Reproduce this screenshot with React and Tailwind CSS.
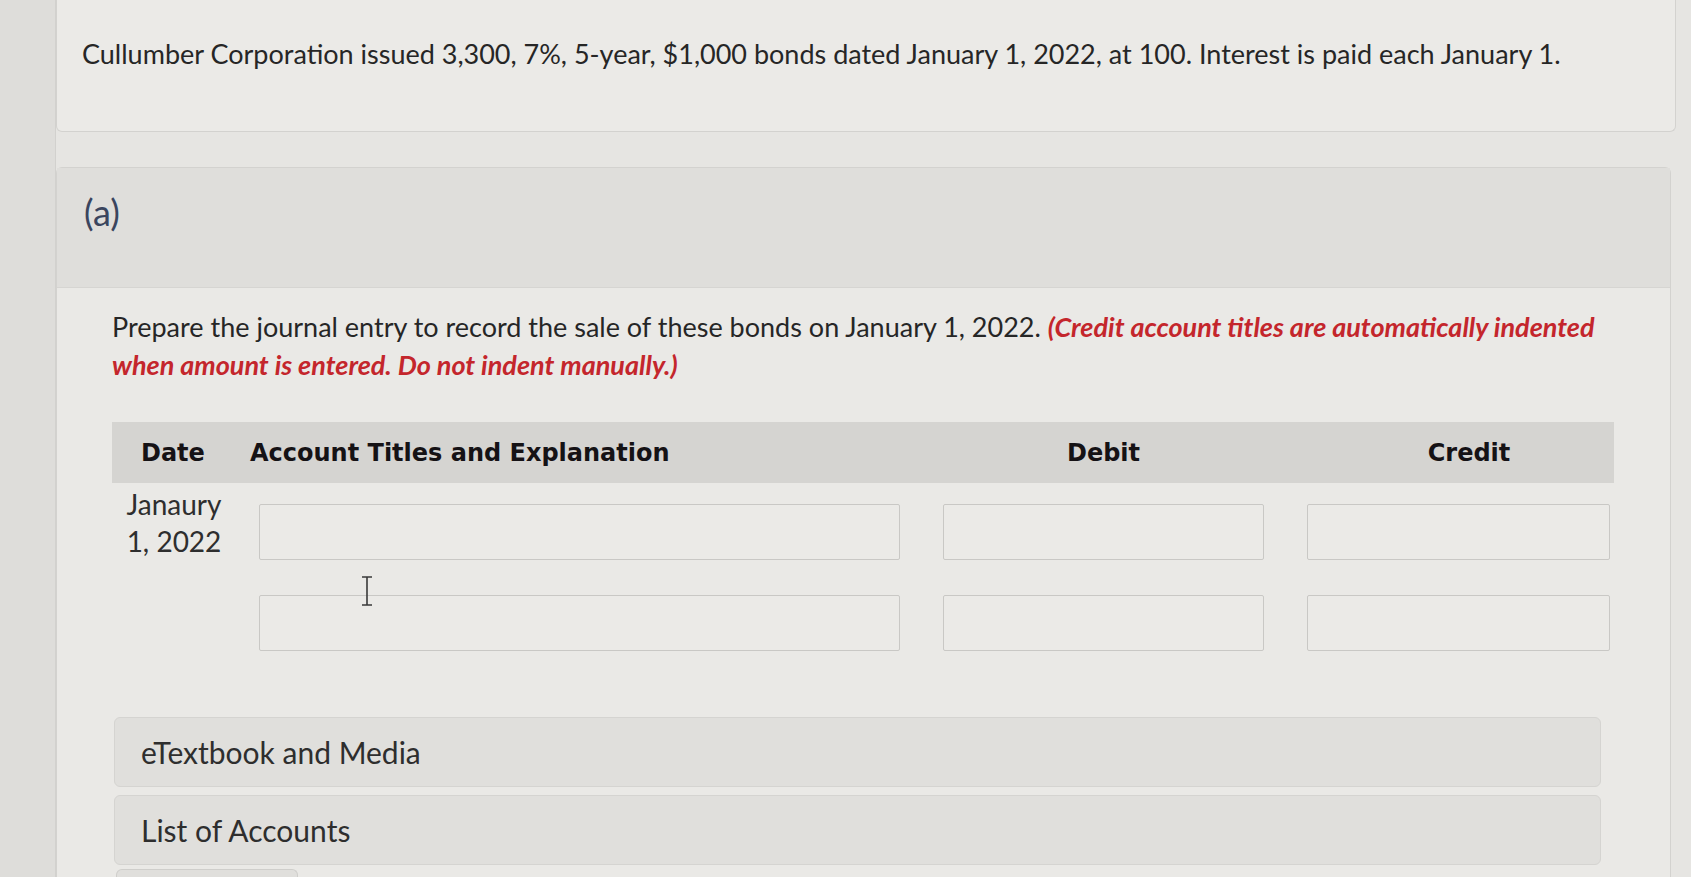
import React from 'react';

/**
 * App.jsx
 * Journal entry question — bonds issued at par.
 */

const Field = ({ className = '' }) => (
  <div className={`h-[56px] shrink-0 rounded-[2px] border border-[#c9c8c5] bg-[#ebeae7] ${className}`} />
);

const IBeam = () => (
  <svg width="14" height="30" viewBox="0 0 14 30" className="absolute left-[360px] top-[576px]">
    <path d="M2 1h10M7 1v28M2 29h10" stroke="#3a3a3a" strokeWidth="1.6" fill="none" />
  </svg>
);

const Panel = ({ children }) => (
  <div className="flex h-[70px] shrink-0 items-center rounded-[6px] border border-[#d5d4d1] bg-[#e0dfdc] px-[26px] text-[30px] text-[#2e2e2e]">
    {children}
  </div>
);

const App = () => {
  return (
    <div
      className="relative flex h-[877px] w-[1691px] overflow-hidden bg-[#e6e5e2]"
      style={{ fontFamily: 'Lato, "Open Sans", sans-serif' }}
    >
      {/* left margin strip */}
      <div className="w-[56px] shrink-0 border-r border-[#d2d1ce] bg-[#dedddA]" />

      <div className="flex w-[1615px] shrink-0 flex-col">
        {/* Problem statement */}
        <div className="flex h-[132px] w-[1620px] shrink-0 items-start rounded-b-[6px] border border-t-0 border-[#d3d2cf] bg-[#ebeae7] pl-[25px] pt-[35px]">
          <p className="text-[27px] leading-[38px] text-[#262626]">
            Cullumber Corporation issued 3,300, 7%, 5-year, $1,000 bonds dated January 1, 2022, at 100. Interest is paid each January 1.
          </p>
        </div>

        {/* Part (a) */}
        <div className="mt-[35px] flex flex-1 flex-col rounded-t-[6px] border border-b-0 border-[#d3d2cf] bg-[#eae9e6]">
          <div className="flex h-[120px] shrink-0 items-center border-b border-[#d6d5d2] bg-[#dfdedb] pb-[32px] pl-[27px]">
            <span className="text-[36px] text-[#3a455e]">(a)</span>
          </div>

          <div className="flex flex-col pl-[55px] pt-[20px]">
            <p className="w-[1530px] text-[27px] leading-[38px] text-[#262626]">
              Prepare the journal entry to record the sale of these bonds on January 1, 2022.{' '}
              <em className="font-bold text-[#c4262c]">
                (Credit account titles are automatically indented when amount is entered. Do not indent manually.)
              </em>
            </p>

            {/* Table header */}
            <div
              className="mt-[38px] flex h-[61px] w-[1502px] shrink-0 items-center bg-[#d5d4d1] text-[24px] font-bold text-[#151215]"
              style={{ fontFamily: '"DejaVu Sans", Verdana, sans-serif' }}
            >
              <div className="w-[138px] shrink-0 pl-[29px]">Date</div>
              <div className="w-[693px] shrink-0">Account Titles and Explanation</div>
              <div className="w-[321px] shrink-0 text-center">Debit</div>
              <div className="flex-1 pl-[60px] text-center">Credit</div>
            </div>

            {/* Rows */}
            <div className="mt-[21px] flex items-start">
              <div className="-mt-[18px] w-[124px] shrink-0 text-center text-[28px] leading-[37px] text-[#2e2e2e]">
                Janaury
                <br />
                1, 2022
              </div>
              <Field className="ml-[23px] w-[641px]" />
              <Field className="ml-[43px] w-[321px]" />
              <Field className="ml-[43px] w-[303px]" />
            </div>
            <div className="mt-[35px] flex items-start">
              <div className="w-[124px] shrink-0" />
              <Field className="ml-[23px] w-[641px]" />
              <Field className="ml-[43px] w-[321px]" />
              <Field className="ml-[43px] w-[303px]" />
            </div>

            {/* Resources */}
            <div className="mt-[66px] flex w-[1489px] flex-col gap-[8px] pl-[2px]">
              <Panel>eTextbook and Media</Panel>
              <Panel>List of Accounts</Panel>
            </div>
            <div className="ml-[4px] mt-[4px] h-[20px] w-[182px] shrink-0 rounded-t-[6px] border border-b-0 border-[#cfcecb] bg-[#e0dfdc]" />
          </div>
        </div>
      </div>

      <IBeam />
    </div>
  );
};

export default App;
